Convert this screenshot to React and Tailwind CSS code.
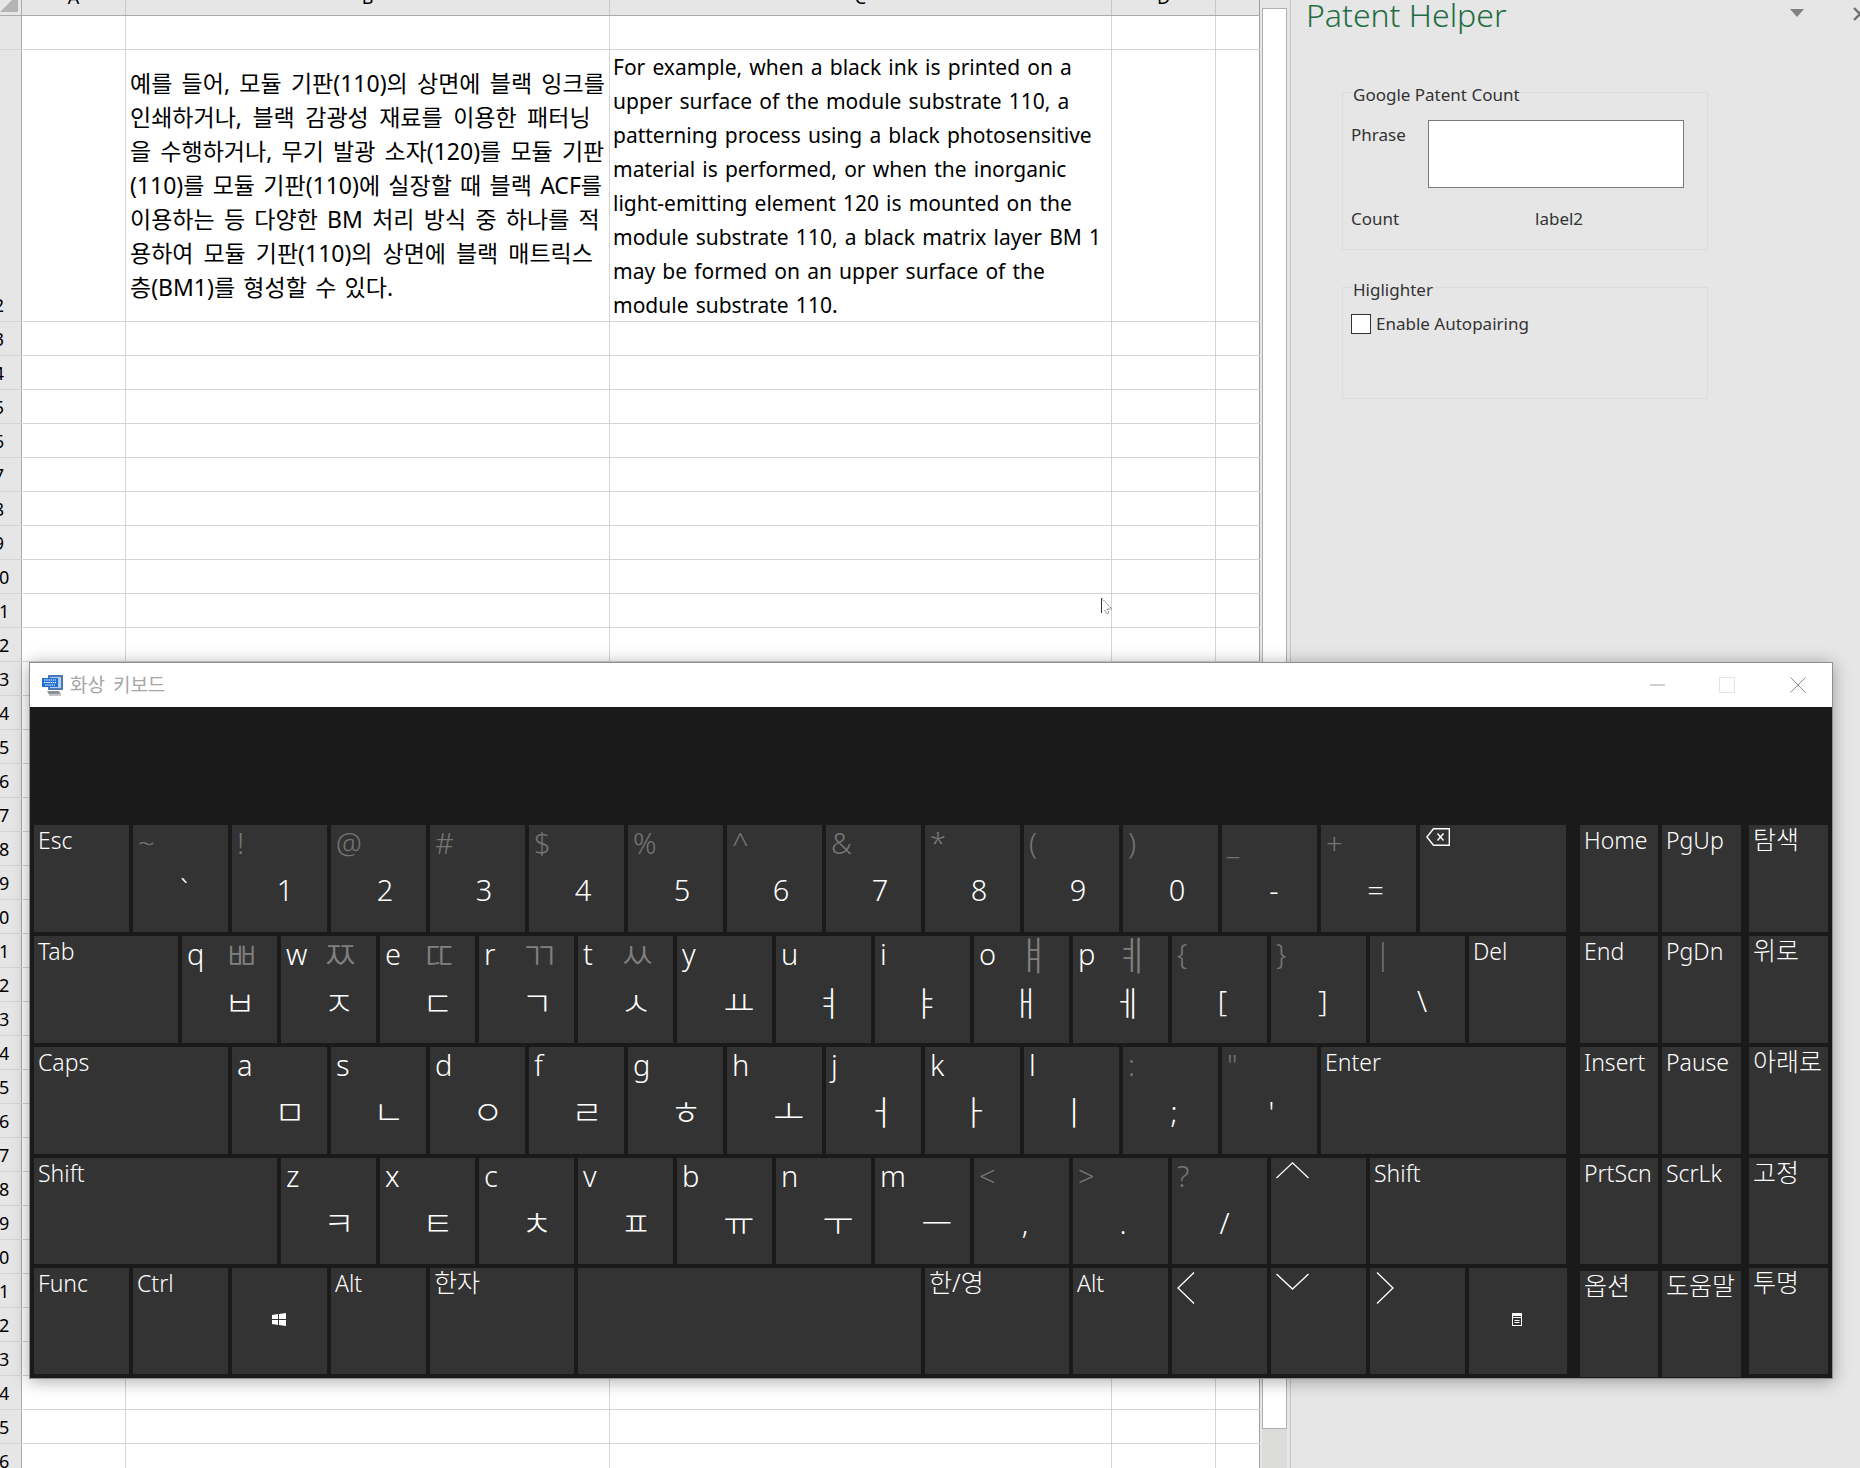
const FONT = "font-['Noto_Sans','Noto_Sans_CJK_KR',sans-serif]";

const koLines = [
  ["예를 들어, 모듈 기판(110)의 상면에 블랙 잉크를", "[word-spacing:3.3px]"],
  ["인쇄하거나, 블랙 감광성 재료를 이용한 패터닝", "[word-spacing:4.5px]"],
  ["을 수행하거나, 무기 발광 소자(120)를 모듈 기판", "[word-spacing:3.2px]"],
  ["(110)를 모듈 기판(110)에 실장할 때 블랙 ACF를", "[word-spacing:2.3px]"],
  ["이용하는 등 다양한 BM 처리 방식 중 하나를 적", "[word-spacing:3.3px]"],
  ["용하여 모듈 기판(110)의 상면에 블랙 매트릭스", "[word-spacing:4px]"],
  ["층(BM1)를 형성할 수 있다.", "[word-spacing:2.3px]"],
];

const enLines = [
  "For example, when a black ink is printed on a",
  "upper surface of the module substrate 110, a",
  "patterning process using a black photosensitive",
  "material is performed, or when the inorganic",
  "light-emitting element 120 is mounted on the",
  "module substrate 110, a black matrix layer BM 1",
  "may be formed on an upper surface of the",
  "module substrate 110.",
];

const rowNumbers = Array.from({ length: 34 }, (_, i) => i + 3);

function RowHead({ n, bottom }) {
  return (
    <div className="w-[22px] h-full shrink-0 overflow-hidden bg-[#e6e6e6] border-r border-[#ababab]">
      <div className={`w-[46px] -ml-[24px] h-full flex justify-center text-[18px] text-black ${bottom ? "items-end pb-[2px]" : "items-center pt-[2px]"}`}>
        {n}
      </div>
    </div>
  );
}

function SheetRow({ n, bottom, className, b, c }) {
  return (
    <div className={`flex border-b border-[#d4d4d4] ${className}`}>
      <RowHead n={n} bottom={bottom} />
      <div className="w-[104px] h-full border-r border-[#d4d4d4]" />
      <div className="w-[484px] h-full border-r border-[#d4d4d4]">{b}</div>
      <div className="w-[502px] h-full border-r border-[#d4d4d4]">{c}</div>
      <div className="w-[104px] h-full border-r border-[#d4d4d4]" />
      <div className="w-[44px] h-full border-r border-[#a0a0a0]" />
    </div>
  );
}

function ColHead({ label, className }) {
  return (
    <div className={`h-full flex justify-center overflow-hidden border-r border-[#c8c8c8] ${className}`}>
      <span className="text-[18px] leading-[20px] -mt-[13px] text-black">{label}</span>
    </div>
  );
}

function Sheet() {
  return (
    <div className="w-[1260px] shrink-0 bg-white">
      <div className="flex h-[16px] bg-[#e6e6e6] border-b border-[#ababab]">
        <div className="w-[22px] h-full border-r border-[#ababab] overflow-hidden">
          <svg width="18" height="12" viewBox="0 0 18 12">
            <path d="M12 0H18V12H0Z" fill="#b4b4b4" />
          </svg>
        </div>
        <ColHead label="A" className="w-[104px]" />
        <ColHead label="B" className="w-[484px]" />
        <ColHead label="C" className="w-[502px]" />
        <ColHead label="D" className="w-[104px]" />
        <div className="w-[44px] h-full border-r border-[#a0a0a0]" />
      </div>
      <SheetRow className="h-[34px]" />
      <SheetRow
        n={2}
        bottom
        className="h-[272px]"
        b={
          <div className="pl-[4px] pt-[16px] text-[23px] leading-[34px] text-black whitespace-nowrap">
            {koLines.map(([l, spacing]) => (
              <div key={l} className={spacing}>{l}</div>
            ))}
          </div>
        }
        c={
          <div className="pl-[3px] text-[21px] leading-[34px] text-black whitespace-nowrap [word-spacing:1.7px]">
            {enLines.map((l) => (
              <div key={l}>{l}</div>
            ))}
          </div>
        }
      />
      {rowNumbers.map((n) => (
        <SheetRow key={n} n={n} className="h-[34px]" />
      ))}
    </div>
  );
}

function Scrollbar() {
  return (
    <div className="w-[31px] shrink-0 h-full flex bg-[#e6e6e6] border-r border-[#c6c6c6]">
      <div className="w-[2px] shrink-0" />
      <div className="w-[25px] shrink-0 flex flex-col bg-[#dbdbd9]">
        <div className="h-[9px] bg-[#e6e6e6] border-b border-[#b0b0b0]" />
        <div className="h-[1420px] bg-white border-l border-r border-b border-[#b0b0b0]" />
      </div>
    </div>
  );
}

function SidePanel() {
  return (
    <div className="flex-1 h-full bg-[#e6e6e6] overflow-hidden relative">
      <div className="flex items-start h-[32px]">
        <h1 className="ml-[15px] -mt-[1px] text-[32px] leading-[32px] font-light text-[#1f6e43] whitespace-nowrap">Patent Helper</h1>
        <svg className="ml-[283px] mt-[9px] shrink-0" width="14" height="8" viewBox="0 0 14 8">
          <path d="M0 0H14L7 8Z" fill="#808080" />
        </svg>
        <svg className="ml-[49px] mt-[7px] shrink-0" width="14" height="14" viewBox="0 0 14 14">
          <path d="M1 1L13 13M13 1L1 13" stroke="#707070" strokeWidth="2.4" />
        </svg>
      </div>
      <div className="ml-[51px] w-[366px] mt-[47px] flex flex-col text-[17px] text-[#333333]">
        <fieldset className="h-[171px] border border-[#dcdcdc] px-[9px]">
          <legend className="ml-[1px] pt-[5px] leading-[22px]">Google Patent Count</legend>
          <div className="flex items-start mt-[14px]">
            <span className="w-[76px] -ml-[1px] leading-[24px] mt-[3px]">Phrase</span>
            <div className="w-[256px] h-[68px] ml-[1px] bg-white border border-[#7a7a7a]" />
          </div>
          <div className="flex mt-[19px] leading-[24px]">
            <span className="w-[183px] -ml-[1px]">Count</span>
            <span className="ml-[1px]">label2</span>
          </div>
        </fieldset>
        <fieldset className="h-[125px] mt-[24px] border border-[#dcdcdc] px-[9px]">
          <legend className="ml-[1px] pt-[5px] leading-[22px]">Higlighter</legend>
          <div className="flex items-center mt-[10px] -ml-[1px]">
            <div className="w-[20px] h-[20px] bg-white border border-[#333333]" />
            <span className="ml-[5px]">Enable Autopairing</span>
          </div>
        </fieldset>
      </div>
    </div>
  );
}

function Key({ w = "w-[95px]", tl, tr, br, brPad = "pl-[13px]", brSize = "text-[29px]", brTop = "mt-[12px]", top, plain, ko, className = "", children }) {
  return (
    <div className={`h-full bg-[#333333] shrink-0 overflow-hidden text-white ${w} ${className}`}>
      {plain && (
        <div className={`pl-[4px] h-[30px] flex items-center font-light whitespace-nowrap ${ko ? "text-[25px]" : "text-[23px]"}`}>
          {plain}
        </div>
      )}
      {(tl || tr) && (
        <div className="grid grid-cols-[24px_71px] grid-rows-[34px] h-[34px] items-center">
          <span className={`pl-[5px] whitespace-nowrap text-[29px] leading-none font-light ${top ? "text-white" : "text-[#767676]"}`}>{tl}</span>
          <span className="text-center text-[40px] leading-none text-[#808080] font-['Noto_Sans_CJK_KR',sans-serif] font-light">{tr}</span>
        </div>
      )}
      {br && (
        <div className={`h-[38px] flex items-center justify-center font-light ${brTop} ${brSize} ${brPad}`}>{br}</div>
      )}
      {children}
    </div>
  );
}

function Sym({ s, k, pad }) {
  return <Key tl={s} br={k} brPad={pad} />;
}

function Letter({ l, up, h, hi, pad = "pl-[21px]" }) {
  return (
    <Key
      top
      tl={l}
      tr={up}
      br={h}
      brPad={pad}
      brTop={hi ? "mt-[10px]" : "mt-[12px]"}
      brSize="text-[34px] font-['Noto_Sans_CJK_KR',sans-serif]"
    />
  );
}

function Backspace() {
  return (
    <svg className="ml-[6px] mt-[3px]" width="24" height="18" viewBox="0 0 24 18" fill="none" stroke="white" strokeWidth="1.4">
      <path d="M23.3 .8V17.2H7.5L.9 9 7.5 .8Z" />
      <path d="M11.5 5.5L17.5 12.5M17.5 5.5L11.5 12.5" />
    </svg>
  );
}

function Chevron({ d, className, width, height }) {
  return (
    <svg className={className} width={width} height={height} viewBox={`0 0 ${width} ${height}`} fill="none" stroke="white" strokeWidth="1.3">
      <path d={d} />
    </svg>
  );
}

function WinLogo() {
  return (
    <svg className="mt-[45px] ml-[40px]" width="14" height="13" viewBox="0 0 14 13" fill="white">
      <path d="M0 2L6 1V6H0ZM7 .9L14 0V6H7ZM0 7H6V12L0 11ZM7 7H14V13L7 12.1Z" />
    </svg>
  );
}

function MenuIcon() {
  return (
    <svg className="mt-[45px] ml-[43px]" width="10" height="13" viewBox="0 0 10 13">
      <rect width="10" height="13" fill="white" />
      <path d="M1 3.5H9" stroke="#333333" />
      <rect x="1" y="5" width="8" height="7" fill="#333333" />
      <path d="M2.5 7.5H7.5M2.5 9.5H7.5" stroke="white" />
    </svg>
  );
}

function MainKeys() {
  return (
    <div className="w-[1532px] flex flex-col gap-[4px]">
      <div className="flex gap-[4px] h-[107px]">
        <Key plain="Esc" />
        <Sym s="~" k="`" pad="pl-[7px]" />
        <Sym s="!" k="1" pad="pl-[11px]" />
        <Sym s="@" k="2" />
        <Sym s="#" k="3" />
        <Sym s="$" k="4" />
        <Sym s="%" k="5" />
        <Sym s="^" k="6" />
        <Sym s="&" k="7" />
        <Sym s="*" k="8" />
        <Sym s="(" k="9" />
        <Sym s=")" k="0" />
        <Sym s="_" k="-" pad="pl-[9px]" />
        <Sym s="+" k="=" pad="pl-[14px]" />
        <Key w="w-[146px]"><Backspace /></Key>
      </div>
      <div className="flex gap-[4px] h-[107px]">
        <Key w="w-[144px]" plain="Tab" />
        <Letter l="q" up="ㅃ" h="ㅂ" />
        <Letter l="w" up="ㅉ" h="ㅈ" />
        <Letter l="e" up="ㄸ" h="ㄷ" />
        <Letter l="r" up="ㄲ" h="ㄱ" />
        <Letter l="t" up="ㅆ" h="ㅅ" />
        <Letter l="y" h="ㅛ" pad="pl-[29px]" />
        <Letter l="u" h="ㅕ" pad="pl-[11px]" />
        <Letter l="i" h="ㅑ" pad="pl-[7px]" />
        <Letter l="o" up="ㅒ" h="ㅐ" pad="pl-[9px]" />
        <Letter l="p" up="ㅖ" h="ㅔ" pad="pl-[15px]" />
        <Sym s="{" k="[" pad="pl-[6px]" />
        <Sym s="}" k="]" pad="pl-[9px]" />
        <Sym s="|" k="\" pad="pl-[9px]" />
        <Key w="w-[97px]" plain="Del" />
      </div>
      <div className="flex gap-[4px] h-[107px]">
        <Key w="w-[194px]" plain="Caps" />
        <Letter hi l="a" h="ㅁ" />
        <Letter hi l="s" h="ㄴ" />
        <Letter hi l="d" h="ㅇ" />
        <Letter hi l="f" h="ㄹ" />
        <Letter hi l="g" h="ㅎ" />
        <Letter hi l="h" h="ㅗ" pad="pl-[29px]" />
        <Letter hi l="j" h="ㅓ" pad="pl-[15px]" />
        <Letter hi l="k" h="ㅏ" pad="pl-[4px]" />
        <Letter hi l="l" h="ㅣ" pad="pl-[5px]" />
        <Sym s=":" k=";" pad="pl-[7px]" />
        <Sym s={'"'} k="'" pad="pl-[4px]" />
        <Key w="w-[245px]" plain="Enter" />
      </div>
      <div className="flex gap-[4px] h-[106px]">
        <Key w="w-[243px]" plain="Shift" />
        <Letter hi l="z" h="ㅋ" />
        <Letter hi l="x" h="ㅌ" />
        <Letter hi l="c" h="ㅊ" />
        <Letter hi l="v" h="ㅍ" />
        <Letter hi l="b" h="ㅠ" pad="pl-[29px]" />
        <Letter hi l="n" h="ㅜ" pad="pl-[29px]" />
        <Letter hi l="m" h="ㅡ" pad="pl-[29px]" />
        <Sym s="<" k="," pad="pl-[7px]" />
        <Sym s=">" k="." pad="pl-[5px]" />
        <Sym s="?" k="/" pad="pl-[10px]" />
        <Key><Chevron className="ml-[5px] mt-[4px]" width={33} height={17} d="M.5 16L16.5 .9 32.5 16" /></Key>
        <Key w="w-[196px]" plain="Shift" />
      </div>
      <div className="flex gap-[4px] h-[106px]">
        <Key plain="Func" />
        <Key plain="Ctrl" />
        <Key><WinLogo /></Key>
        <Key plain="Alt" />
        <Key w="w-[144px]" ko plain="한자" />
        <Key w="w-[343px]" />
        <Key w="w-[144px]" ko plain="한/영" />
        <Key plain="Alt" />
        <Key><Chevron className="ml-[5px] mt-[4px]" width={18} height={32} d="M17 .5L1 16 17 31.5" /></Key>
        <Key><Chevron className="ml-[5px] mt-[5px]" width={33} height={17} d="M.5 1L16.5 16 32.5 1" /></Key>
        <Key><Chevron className="ml-[6px] mt-[4px]" width={18} height={32} d="M1 .5L17 16 1 31.5" /></Key>
        <Key w="w-[98px]"><MenuIcon /></Key>
      </div>
    </div>
  );
}

function SideKeys() {
  const rows = [
    ["Home", "PgUp", "탐색", "h-[107px]"],
    ["End", "PgDn", "위로", "h-[107px]"],
    ["Insert", "Pause", "아래로", "h-[107px]"],
    ["PrtScn", "ScrLk", "고정", "h-[106px]"],
  ];
  return (
    <div className="ml-[14px] flex flex-col gap-[4px]">
      {rows.map(([a, b, c, h]) => (
        <div key={a} className={`flex ${h}`}>
          <Key w="w-[78px]" plain={a} />
          <Key w="w-[79px] ml-[4px]" plain={b} />
          <Key w="w-[79px] ml-[8px]" ko plain={c} />
        </div>
      ))}
      <div className="flex h-[106px]">
        <Key w="w-[78px]" className="mt-[3px]" ko plain="옵션" />
        <Key w="w-[79px] ml-[4px]" className="mt-[3px]" ko plain="도움말" />
        <Key w="w-[79px] ml-[8px]" ko plain="투명" />
      </div>
    </div>
  );
}

function TitleIcon() {
  return (
    <svg width="22" height="22" viewBox="0 0 22 22">
      <rect x="6" y="1" width="15" height="15" fill="#4a78b8" />
      <rect x="8" y="3" width="11" height="11" fill="#b5cdea" />
      <path d="M5 17H17L19 20.5H7Z" fill="#8d9096" />
      <path d="M7 20.5H19V22H7Z" fill="#c4c4c4" />
      <rect x="0" y="4" width="16" height="9" fill="#1f6fd6" />
      <path d="M2 6H14M2 8.5H14M3 11H13" stroke="white" strokeWidth="1.2" strokeDasharray="1.5 .7" />
    </svg>
  );
}

function KeyboardWindow() {
  return (
    <div className="absolute left-[29px] top-[662px] w-[1804px] h-[717px] border border-[#8f8f8f] bg-[#1a1a1a] shadow-[0_2px_16px_rgba(0,0,0,0.35)]">
      <div className="h-[44px] bg-white flex items-center">
        <div className="ml-[12px]"><TitleIcon /></div>
        <span className="ml-[6px] text-[19px] text-[#a6a6a6] [word-spacing:3px]">화상 키보드</span>
        <svg className="ml-auto" width="15" height="16" viewBox="0 0 15 16">
          <path d="M0 8H15" stroke="#a0a0a0" />
        </svg>
        <svg className="ml-[54px]" width="16" height="16" viewBox="0 0 16 16" fill="none">
          <rect x=".5" y=".5" width="15" height="15" stroke="#e4e4e4" />
        </svg>
        <svg className="ml-[55px] mr-[26px]" width="16" height="16" viewBox="0 0 16 16">
          <path d="M.5 .5L15.5 15.5M15.5 .5L.5 15.5" stroke="#808080" strokeWidth=".9" />
        </svg>
      </div>
      <div className="pt-[118px] pl-[4px] flex">
        <MainKeys />
        <SideKeys />
      </div>
    </div>
  );
}

export default function App() {
  return (
    <div className={`relative w-[1860px] h-[1468px] overflow-hidden flex bg-[#e6e6e6] ${FONT}`}>
      <Sheet />
      <Scrollbar />
      <SidePanel />
      <svg className="absolute left-[1100px] top-[597px]" width="14" height="20" viewBox="0 0 14 20">
        <path d="M1.5 1V16L4.5 13 7 17 9 16 7 12H12Z" fill="white" />
        <path d="M1.5 1V16" stroke="#333333" />
        <path d="M1.5 1L12 12H7L9 16 7 17 4.5 13" fill="none" stroke="#666666" strokeDasharray="1.5 1" />
      </svg>
      <KeyboardWindow />
    </div>
  );
}
